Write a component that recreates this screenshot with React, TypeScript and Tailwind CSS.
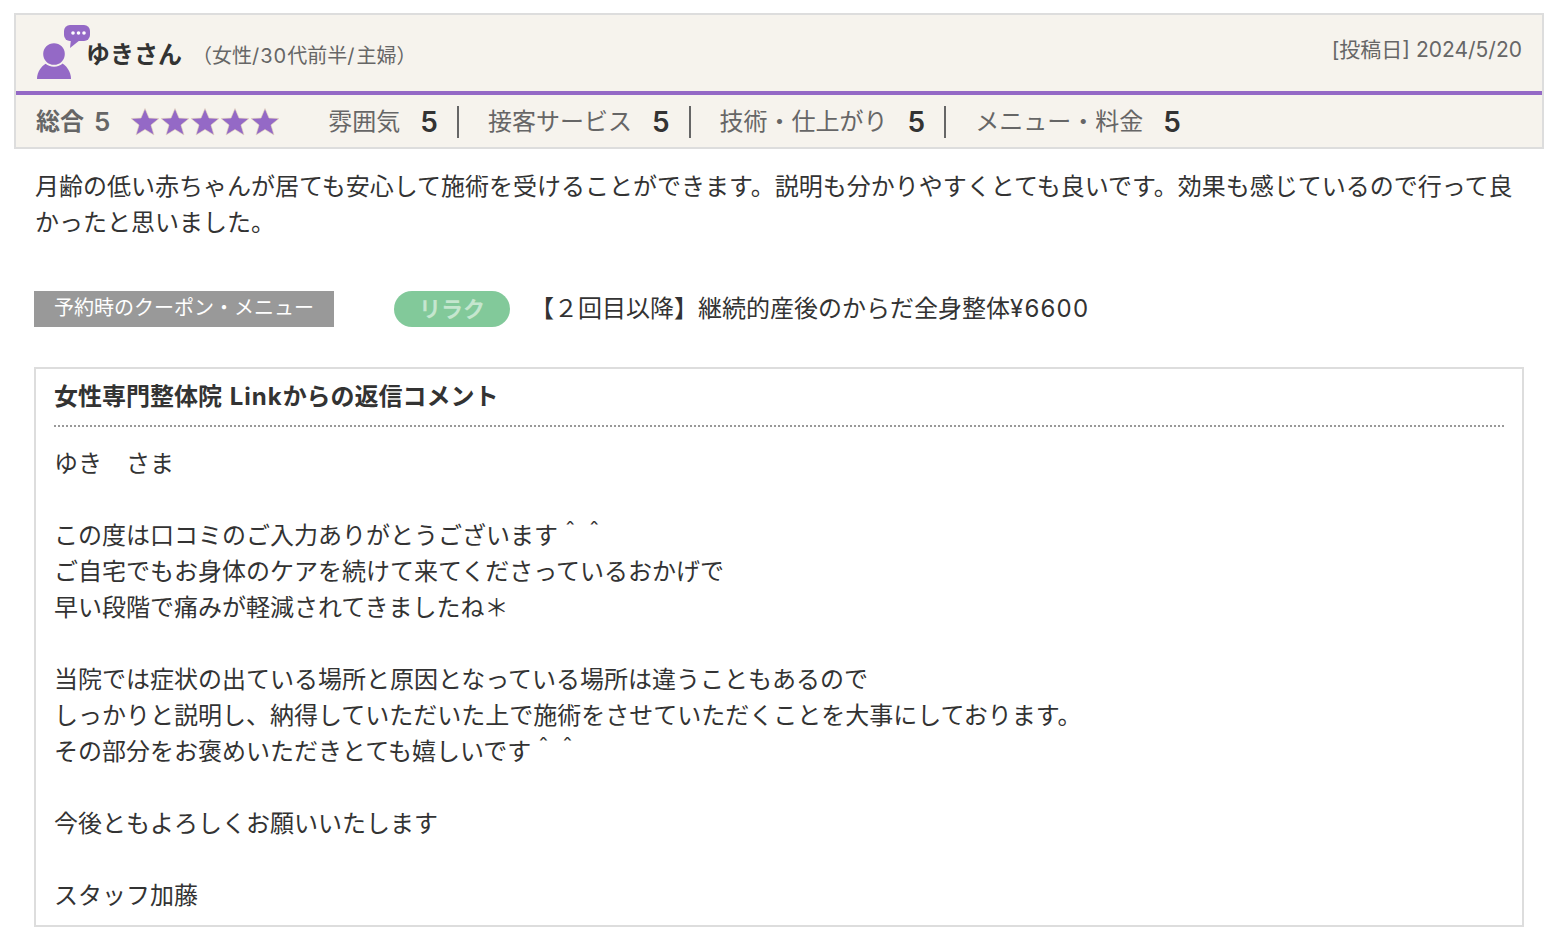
import React from "react";

const ratings = [
  { label: "雰囲気", value: 5 },
  { label: "接客サービス", value: 5 },
  { label: "技術・仕上がり", value: 5 },
  { label: "メニュー・料金", value: 5 },
];

const replyLines = [
  "ゆき　さま",
  "",
  "この度は口コミのご入力ありがとうございます＾＾",
  "ご自宅でもお身体のケアを続けて来てくださっているおかげで",
  "早い段階で痛みが軽減されてきましたね＊",
  "",
  "当院では症状の出ている場所と原因となっている場所は違うこともあるので",
  "しっかりと説明し、納得していただいた上で施術をさせていただくことを大事にしております。",
  "その部分をお褒めいただきとても嬉しいです＾＾",
  "",
  "今後ともよろしくお願いいたします",
  "",
  "スタッフ加藤",
];

function UserIcon() {
  return (
    <svg width="54" height="54" viewBox="0 0 54 54" className="shrink-0">
      <path d="M0 54 C0 46 5 40 12 37 L23 37 C29 40 34 46 34 54 Z" fill="#9469c6" />
      <circle cx="17" cy="29" r="11.8" fill="#9469c6" stroke="#f6f3ed" strokeWidth="2" />
      <rect x="27" y="0" width="26" height="16" rx="6" fill="#9469c6" />
      <path d="M34 14 L33 23 L43 15 Z" fill="#9469c6" />
      <circle cx="36" cy="8" r="1.8" fill="#fff" />
      <circle cx="41.5" cy="8" r="1.8" fill="#fff" />
      <circle cx="47" cy="8" r="1.8" fill="#fff" />
    </svg>
  );
}

function Star() {
  return (
    <svg width="30" height="30" viewBox="0 0 30 30" className="blur-[0.7px]">
      <polygon
        points="15,1.5 19,11 29,11.5 21,18 24,28 15,22.5 6,28 9,18 1,11.5 11,11"
        fill="#9469c6"
        stroke="#e8d9b8"
        strokeWidth="0.6"
      />
    </svg>
  );
}

export default function App() {
  return (
    <div
      className="w-[1565px] h-[948px] bg-white text-[#333] pt-[13px] overflow-hidden"
      style={{ fontFamily: 'Inter, "Noto Sans CJK JP", sans-serif' }}
    >
      {/* Header */}
      <div className="ml-[14px] w-[1530px] h-[136px] border-2 border-[#dddddd] bg-[#f6f3ed]">
        <div className="h-[76px] flex justify-between pl-[21px] pr-[20px]">
          <div className="flex items-start pt-[10px]">
            <UserIcon />
            <span className="ml-[-5px] mt-[14px] text-[24px] leading-[32px] font-bold text-[#333]">ゆきさん</span>
            <span className="ml-[10px] mt-[17px] text-[20px] leading-[28px] text-[#666]">
              （女性<span className="tracking-[1px]">/30</span>代前半<span className="tracking-[2px]">/</span>主婦）
            </span>
          </div>
          <div className="pt-[20px] text-[21px] leading-[30px] text-[#666]">[投稿日] 2024/5/20</div>
        </div>
        <div className="h-[4px] bg-[#9469c6]" />
        <div className="h-[54px] flex items-center pl-[20px]">
          <span className="text-[24px] font-bold text-[#666]">総合</span>
          <span className="ml-[10px] text-[26px] font-semibold text-[#666] leading-none">5</span>
          <div className="ml-[20px] flex">
            <Star />
            <Star />
            <Star />
            <Star />
            <Star />
          </div>
          <div className="ml-[48px] flex items-center">
            {ratings.map((r, i) => (
              <div
                key={r.label}
                className={
                  i < ratings.length - 1
                    ? "flex items-center h-[32px] pr-[19px] mr-[29px] border-r-2 border-[#666]"
                    : "flex items-center h-[32px]"
                }
              >
                <span className="text-[24px] text-[#666]">{r.label}</span>
                <span className="ml-[20px] text-[28px] font-semibold leading-none text-[#333]">{r.value}</span>
              </div>
            ))}
          </div>
        </div>
      </div>

      {/* Review body */}
      <div className="ml-[35px] mt-[20px] w-[1495px] text-[24px] leading-[36px] text-[#333]">
        月齢の低い赤ちゃんが居ても安心して施術を受けることができます。説明も分かりやすくとても良いです。効果も感じているので行って良かったと思いました。
      </div>

      {/* Coupon row */}
      <div className="ml-[34px] mt-[50px] flex items-center h-[36px]">
        <div className="w-[300px] h-[36px] bg-[#999999] text-white text-[20px] leading-[34px] pl-[20px]">
          予約時のクーポン・メニュー
        </div>
        <div className="ml-[60px] w-[116px] h-[36px] rounded-[18px] bg-[#82c99a] text-[#c5e6cf] text-[22px] leading-[36px] font-bold text-center">
          リラク
        </div>
        <div className="ml-[20px] text-[24px] leading-[36px] text-[#333]">
          【２回目以降】継続的産後のからだ全身整体<span className="tracking-[1.2px]">¥6600</span>
        </div>
      </div>

      {/* Reply */}
      <div className="ml-[34px] mt-[40px] w-[1490px] h-[560px] border-2 border-[#dddddd] px-[18px]">
        <div className="h-[58px] border-b-2 border-dotted border-[#999] pt-[11px] text-[24px] leading-[34px] font-bold text-[#333]">
          女性専門整体院 <span className="ml-[2px] tracking-[1px]">Link</span>からの返信コメント
        </div>
        <div className="pt-[19px] text-[24px] leading-[36px] text-[#333]">
          {replyLines.map((line, i) => (
            <div key={i} className="h-[36px] whitespace-pre">
              {line}
            </div>
          ))}
        </div>
      </div>
    </div>
  );
}
